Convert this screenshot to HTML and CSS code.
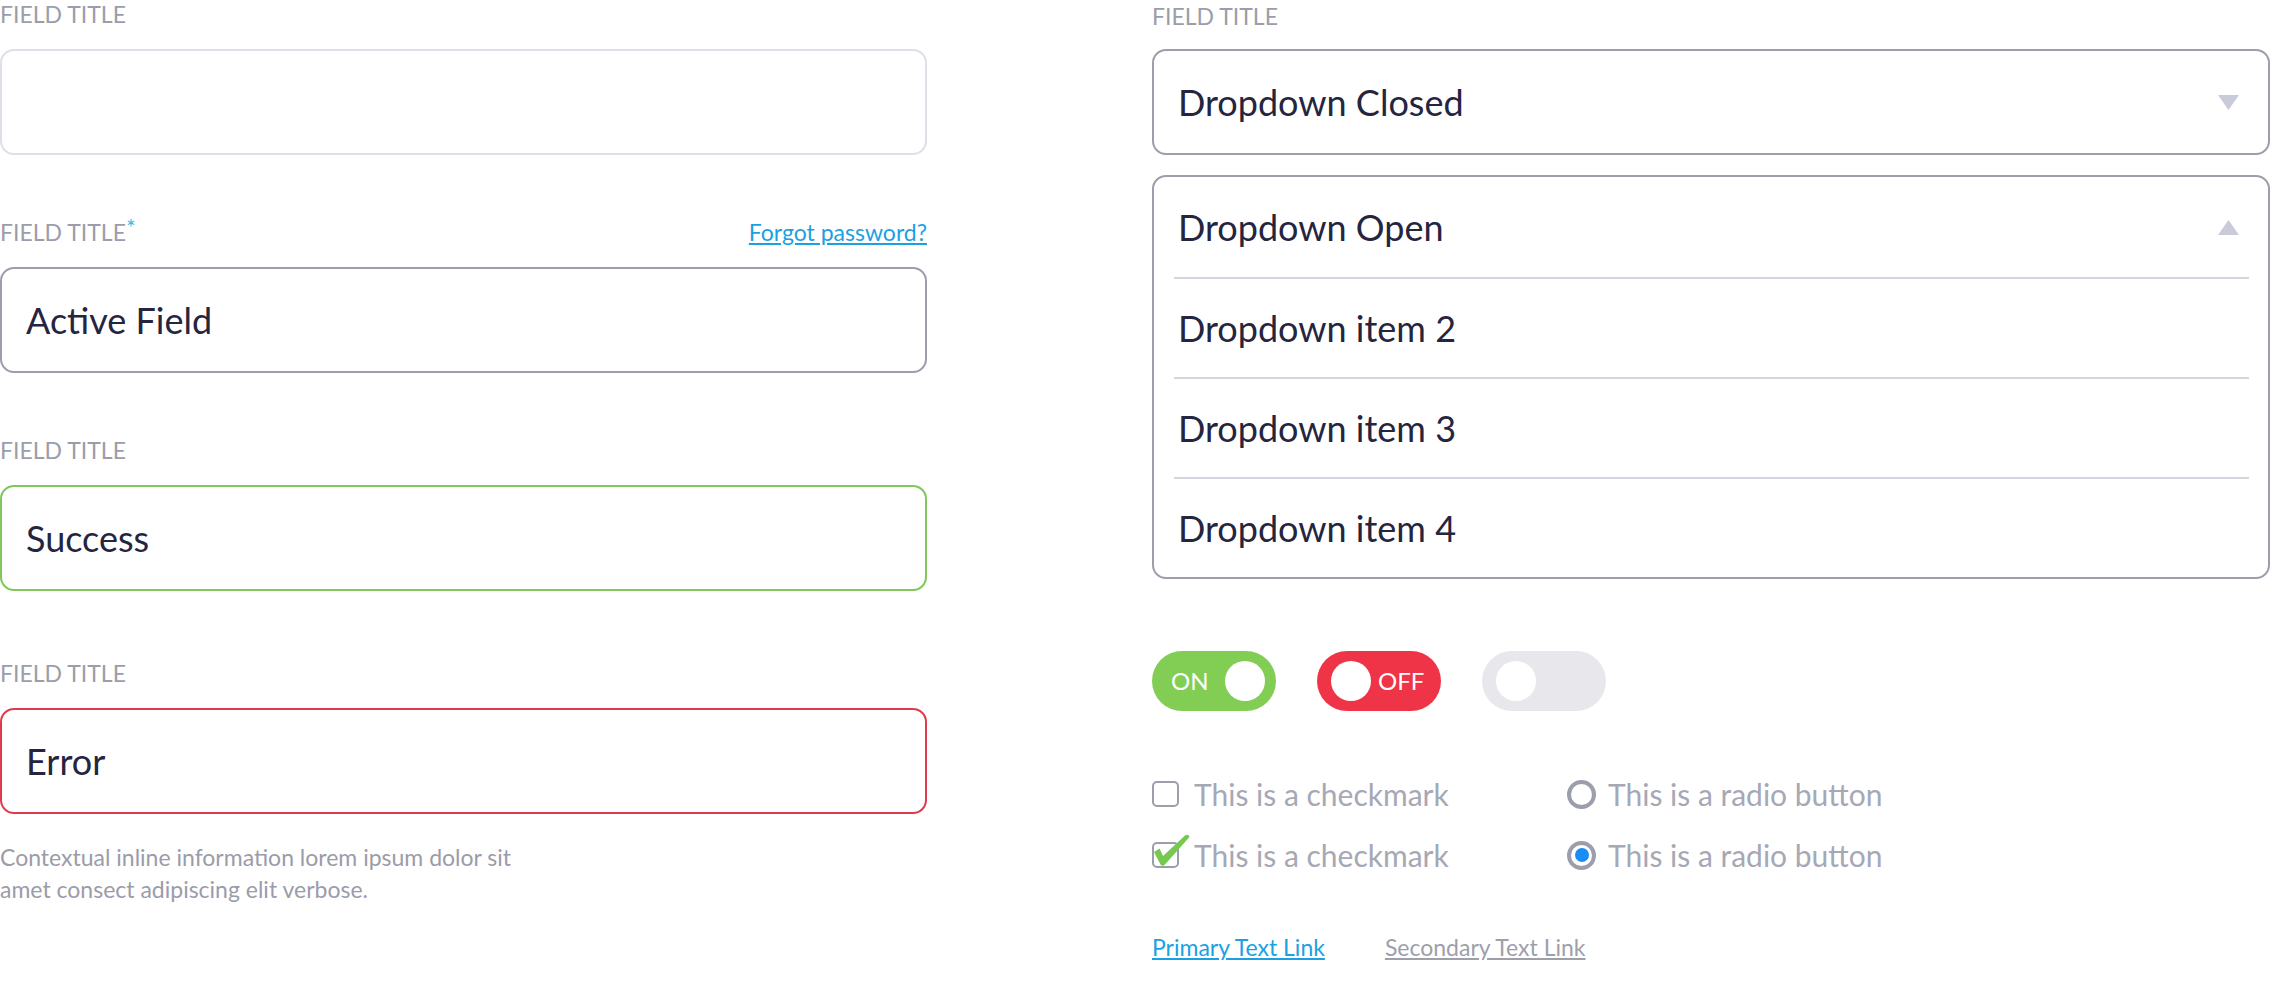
FILE: index.html
```html
<!DOCTYPE html>
<html>
<head>
<meta charset="utf-8">
<title>Form components</title>
<link rel="stylesheet" href="styles.css">
</head>
<body>
<div class="page">
  <div class="col col-left">
    <div class="field">
      <div class="label-row"><span class="label">FIELD TITLE</span></div>
      <div class="input input-empty"></div>
    </div>
    <div class="field">
      <div class="label-row"><span class="label">FIELD TITLE<span class="req">*</span></span><a class="forgot" href="#">Forgot password?</a></div>
      <div class="input input-active">Active Field</div>
    </div>
    <div class="field">
      <div class="label-row"><span class="label">FIELD TITLE</span></div>
      <div class="input input-success">Success</div>
    </div>
    <div class="field field-error">
      <div class="label-row"><span class="label">FIELD TITLE</span></div>
      <div class="input input-error">Error</div>
      <p class="info">Contextual inline information lorem ipsum dolor sit amet consect adipiscing elit verbose.</p>
    </div>
  </div>

  <div class="col col-right">
    <div class="label-row"><span class="label">FIELD TITLE</span></div>
    <div class="select">
      <span>Dropdown Closed</span>
      <svg class="arrow" width="21" height="15" viewBox="0 0 21 15"><path d="M0 0H21L10.5 15Z" fill="#c9cbd8"/></svg>
    </div>
    <div class="select-open">
      <div class="select-head">
        <span>Dropdown Open</span>
        <svg class="arrow" width="21" height="15" viewBox="0 0 21 15"><path d="M0 15H21L10.5 0Z" fill="#c9cbd8"/></svg>
      </div>
      <div class="select-item">Dropdown item 2</div>
      <div class="select-item">Dropdown item 3</div>
      <div class="select-item">Dropdown item 4</div>
    </div>

    <div class="toggles">
      <div class="toggle toggle-on"><span class="toggle-text">ON</span><span class="knob"></span></div>
      <div class="toggle toggle-off"><span class="knob"></span><span class="toggle-text">OFF</span></div>
      <div class="toggle toggle-disabled"><span class="knob"></span></div>
    </div>

    <div class="choices">
      <div class="choice choice-check"><span class="checkbox"></span><span>This is a checkmark</span></div>
      <div class="choice choice-radio"><span class="radio"></span><span>This is a radio button</span></div>
      <div class="choice choice-check"><span class="checkbox checked"><svg class="tick" width="40" height="38" viewBox="0 0 40 38"><path d="M3 19 L8.5 15.5 L12 23 L34 2.5 Q37.5 0.5 38.5 4 L14 31.5 Q11.5 34 9.5 31.5 Z" fill="#76c84f"/></svg></span><span>This is a checkmark</span></div>
      <div class="choice choice-radio"><span class="radio selected"></span><span>This is a radio button</span></div>
    </div>

    <div class="links">
      <a class="link link-primary" href="#">Primary Text Link</a>
      <a class="link link-secondary" href="#">Secondary Text Link</a>
    </div>
  </div>
</div>
</body>
</html>
```

FILE: styles.css
```css
* {
  box-sizing: border-box;
}

body {
  margin: 0;
  background: #ffffff;
  font-family: Lato, "Open Sans", sans-serif;
  color: #25253f;
}

.page {
  display: flex;
  align-items: flex-start;
  gap: 225px;
}

/* ---------- left column ---------- */
.col-left {
  width: 927px;
  padding-top: 2px;
  display: flex;
  flex-direction: column;
  gap: 65px;
}

.field {
  display: flex;
  flex-direction: column;
  gap: 23px;
}

.field-error {
  margin-top: 5px;
}

.label-row {
  display: flex;
  justify-content: space-between;
  align-items: baseline;
  height: 24px;
}

.label {
  font-size: 23px;
  line-height: 24px;
  color: #9b9daa;
}

.req {
  color: #3cb8ea;
  line-height: 0;
  vertical-align: 5px;
}

.forgot {
  font-size: 23px;
  line-height: 24px;
  color: #1ba1e2;
  text-decoration: underline;
}

.input {
  height: 106px;
  border: 2px solid #9d9eab;
  border-radius: 14px;
  padding: 0 24px;
  display: flex;
  align-items: center;
  font-size: 36px;
}

.input-empty {
  border-color: #dfdfe8;
}

.input-success {
  border-color: #7fc65b;
}

.input-error {
  border-color: #dd3b4b;
}

.info {
  margin: 4px 0 0;
  max-width: 545px;
  font-size: 23px;
  line-height: 32px;
  color: #9a9ca9;
}

/* ---------- right column ---------- */
.col-right {
  width: 1118px;
  padding-top: 4px;
  display: flex;
  flex-direction: column;
}

.col-right .label-row {
  margin-bottom: 21px;
}

.select {
  height: 106px;
  border: 2px solid #9d9eab;
  border-radius: 14px;
  padding: 0 29px 0 24px;
  display: flex;
  align-items: center;
  justify-content: space-between;
  font-size: 36px;
}

.select-open {
  margin-top: 20px;
  border: 2px solid #9d9eab;
  border-radius: 14px;
  font-size: 36px;
}

.select-head {
  height: 100px;
  padding: 0 29px 0 24px;
  display: flex;
  align-items: center;
  justify-content: space-between;
}

.select-item {
  height: 100px;
  margin: 0 19px 0 20px;
  padding-left: 4px;
  border-top: 2px solid #d3d5de;
  display: flex;
  align-items: center;
}

.arrow {
  display: block;
}

/* toggles */
.toggles {
  margin-top: 72px;
  display: flex;
  gap: 41px;
}

.toggle {
  width: 124px;
  height: 60px;
  border-radius: 30px;
  display: flex;
  align-items: center;
}

.knob {
  width: 40px;
  height: 40px;
  border-radius: 50%;
  background: #ffffff;
}

.toggle-text {
  color: #ffffff;
  font-size: 24px;
  line-height: 1;
}

.toggle-on {
  background: #82ce55;
  padding: 0 11px 0 19px;
  justify-content: space-between;
}

.toggle-off {
  background: #ee3446;
  padding-left: 14px;
  gap: 7px;
}

.toggle-disabled {
  background: #e8e8ec;
  padding-left: 14px;
}

/* checkboxes & radios */
.choices {
  margin-top: 63px;
  display: grid;
  grid-template-columns: 415px auto;
  row-gap: 21px;
}

.choice {
  height: 40px;
  display: flex;
  align-items: center;
  font-size: 30px;
  color: #a6a8b5;
}

.choice-check {
  gap: 15px;
}

.choice-radio {
  gap: 12px;
}

.checkbox {
  position: relative;
  width: 27px;
  height: 26px;
  border: 2px solid #9c9eab;
  border-radius: 5px;
  flex: none;
}

.tick {
  position: absolute;
  left: -3px;
  top: -11px;
  overflow: visible;
}

.radio {
  width: 29px;
  height: 29px;
  border: 4px solid #9c9eab;
  border-radius: 50%;
  flex: none;
  display: flex;
  align-items: center;
  justify-content: center;
}

.radio.selected::after {
  content: "";
  width: 14px;
  height: 14px;
  border-radius: 50%;
  background: #1a8cf5;
}

/* links */
.links {
  margin-top: 59px;
  display: flex;
  gap: 60px;
}

.link {
  font-size: 23px;
  line-height: 27px;
  text-decoration: underline;
}

.link-primary {
  color: #1ba1e2;
}

.link-secondary {
  color: #9d9fab;
}
```
